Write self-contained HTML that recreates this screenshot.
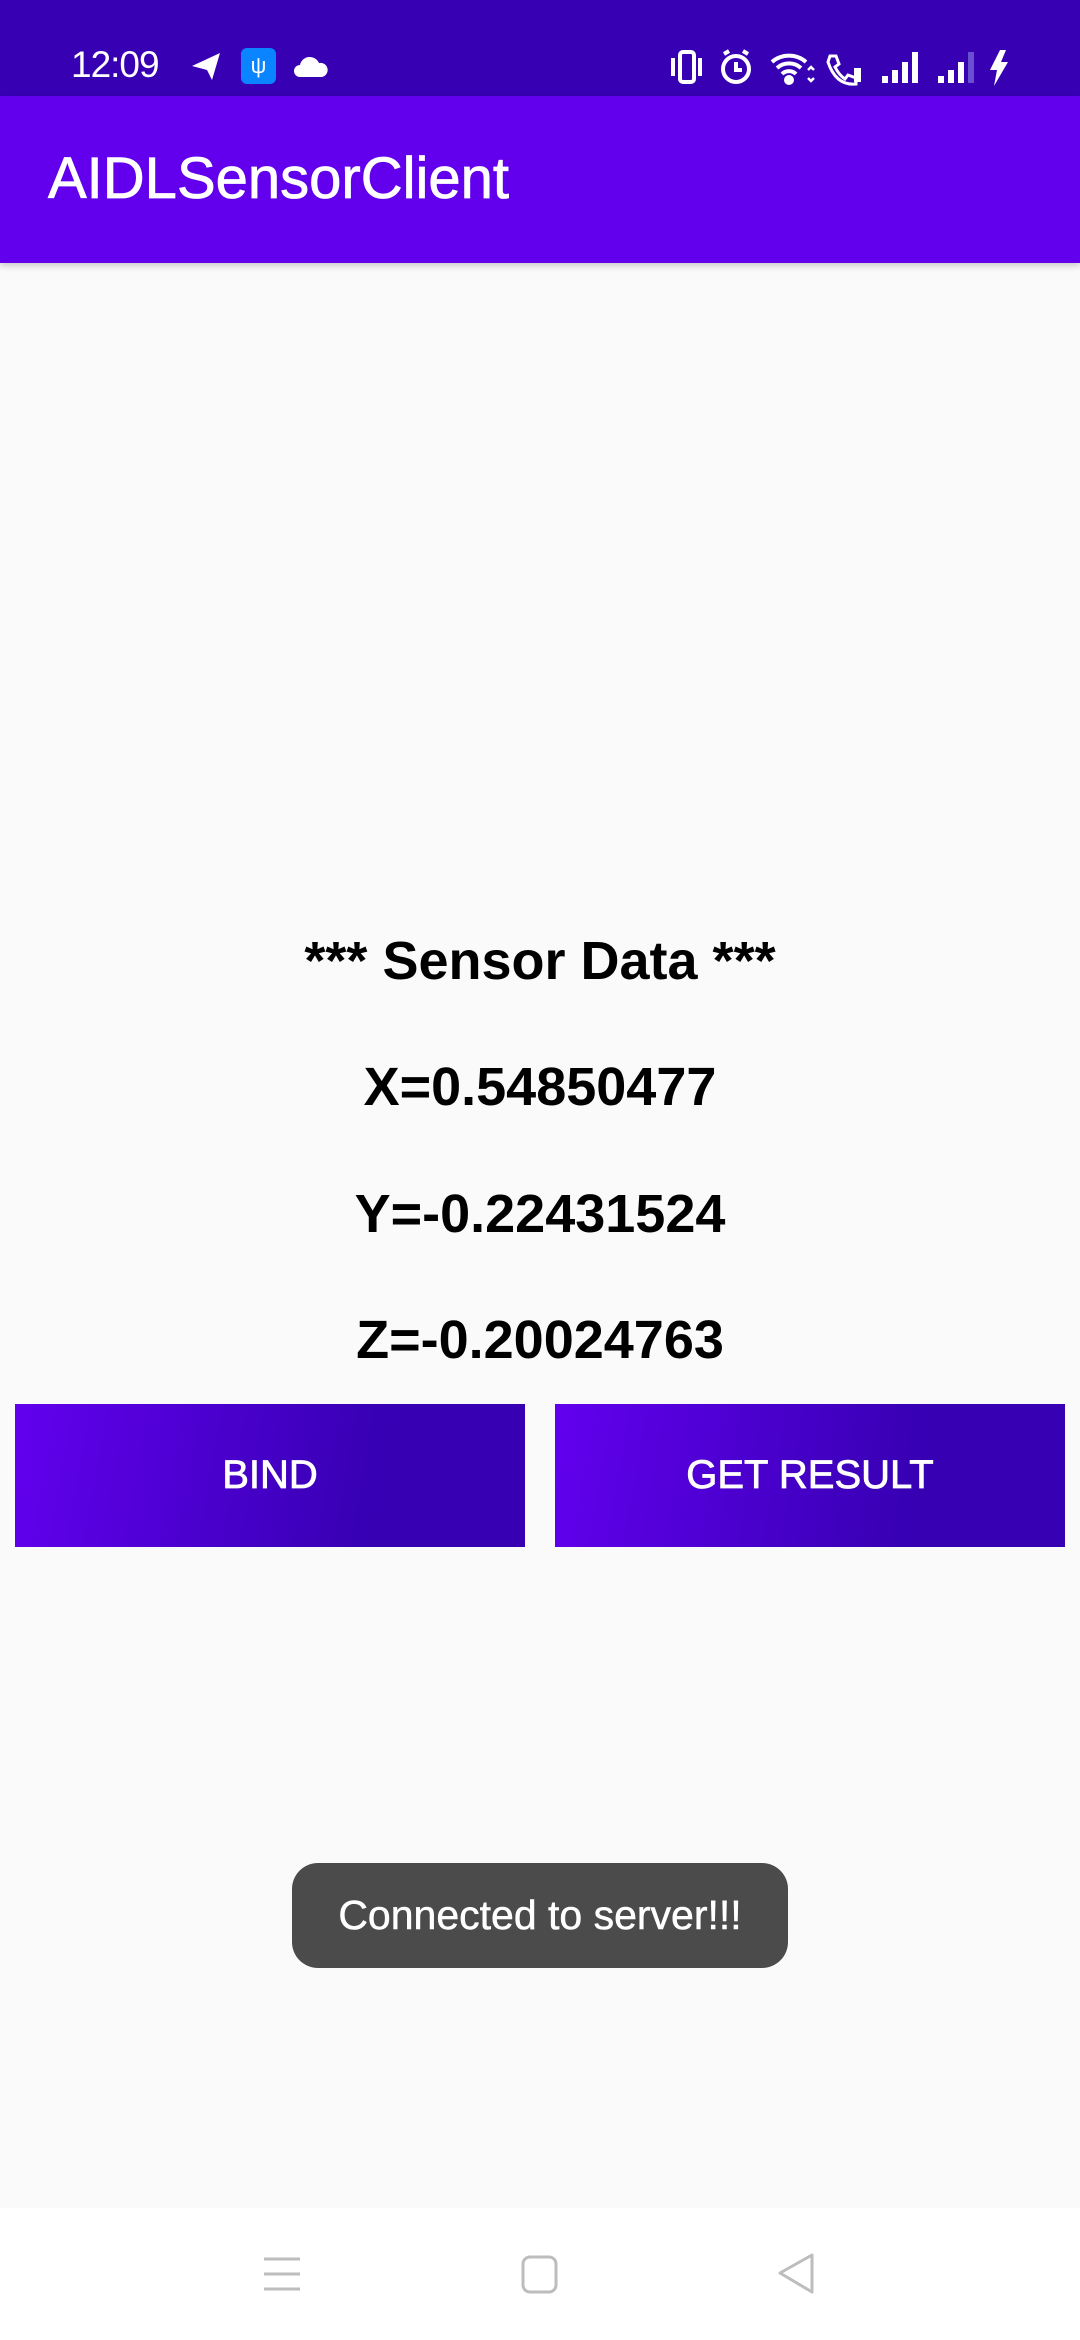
<!DOCTYPE html>
<html><head><meta charset="utf-8"><style>
*{margin:0;padding:0;box-sizing:border-box}
body{width:1080px;height:2340px;background:#fafafa;font-family:"Liberation Sans",Roboto,sans-serif;position:relative;overflow:hidden}
.abs{position:absolute}
#status{left:0;top:0;width:1080px;height:96px;background:#3700b3}
#appbar{left:0;top:96px;width:1080px;height:167px;background:#6200ee;box-shadow:0 3px 6px rgba(0,0,0,.18)}
.title{left:48px;font-size:58px;color:#fff;-webkit-text-stroke:0.8px #fff}
.c{left:0;width:1080px;text-align:center;font-weight:bold;color:#000;font-size:54px}
.btn{top:1404px;height:143px;width:510px;background:linear-gradient(100deg,#6200ee,#3700b3 70%);color:#fff;font-size:40px;display:flex;align-items:center;justify-content:center;-webkit-text-stroke:0.8px #fff}
#toast{left:292px;top:1863px;width:496px;height:105px;background:#4b4b4b;border-radius:26px;color:#fff;font-size:41px;display:flex;align-items:center;justify-content:center;-webkit-text-stroke:0.5px #fff}
#nav{left:0;top:2208px;width:1080px;height:132px;background:#fff}
</style></head><body>
<div id="status" class="abs">
 <div class="abs" style="left:71px;top:44px;font-size:37px;color:#fff;letter-spacing:-1px">12:09</div>
 <svg class="abs" style="left:190px;top:50px" width="32" height="32" viewBox="0 0 32 32"><path d="M2 16 L30 3 L22 30 L17 20 Z" fill="#fff"/></svg>
 <div class="abs" style="left:241px;top:48px;width:35px;height:36px;background:#0a84ff;border-radius:6px;color:#fff;font-size:22px;text-align:center;line-height:36px">ψ</div>
 <svg class="abs" style="left:294px;top:55px" width="34" height="22" viewBox="0 0 34 22"><path d="M6 22 A6 6 0 0 1 6 10 A10 10 0 0 1 25 8 A7 7 0 0 1 28 22 Z" fill="#fff"/></svg>
 <svg class="abs" style="left:670px;top:48px" width="345" height="38" viewBox="0 0 345 38" fill="none" stroke="#fff" stroke-width="4">
  <rect x="10" y="4" width="14" height="30" rx="3"/><path d="M3 10 v18 M30 10 v18"/>
  <circle cx="66" cy="21" r="13"/><path d="M66 14 v8 h6 M54 6 l5 -3 M78 6 l-5 -3"/>
  <path d="M102 14 a26 26 0 0 1 34 0 M107 20 a18 18 0 0 1 24 0 M112 26 a10 10 0 0 1 14 0"/><circle cx="119" cy="32" r="3" fill="#fff"/><path d="M138 22 l3 -3 3 3 M138 30 l3 3 3 -3" stroke-width="2.5"/>
  <path d="M160 8 l6 0 l3 8 l-4 3 q4 8 10 12 l3 -4 l8 3 v6 q-20 2 -28 -22 z" stroke-width="3"/><rect x="184" y="20" width="7" height="14" fill="#fff" stroke="none"/>
  <g fill="#fff" stroke="none"><rect x="212" y="28" width="6" height="7"/><rect x="222" y="22" width="6" height="13"/><rect x="232" y="14" width="6" height="21"/><rect x="242" y="4" width="6" height="31"/>
  <rect x="268" y="28" width="6" height="7"/><rect x="278" y="22" width="6" height="13"/><rect x="288" y="14" width="6" height="21"/><rect x="298" y="4" width="6" height="31" fill="#6a50d0"/>
  <path d="M330 2 L320 22 H327 L324 38 L338 14 H331 L336 2 Z"/></g>
 </svg>
</div>
<div id="appbar" class="abs"><div class="abs title" style="top:49px">AIDLSensorClient</div></div>
<div class="abs c" style="top:930px">*** Sensor Data ***</div>
<div class="abs c" style="top:1056px">X=0.54850477</div>
<div class="abs c" style="top:1183px">Y=-0.22431524</div>
<div class="abs c" style="top:1309px">Z=-0.20024763</div>
<div class="abs btn" style="left:15px">BIND</div>
<div class="abs btn" style="left:555px">GET RESULT</div>
<div id="toast" class="abs">Connected to server!!!</div>
<div id="nav" class="abs">
 <svg class="abs" style="left:262px;top:48px" width="40" height="36"><path d="M2 3h36M2 18h36M2 33h36" stroke="#bdbdbd" stroke-width="3"/></svg>
 <svg class="abs" style="left:520px;top:46px" width="40" height="40"><rect x="3" y="3" width="33" height="35" rx="7" fill="none" stroke="#bdbdbd" stroke-width="3"/></svg>
 <svg class="abs" style="left:776px;top:44px" width="40" height="44"><path d="M36 3 L4 21 L36 40 Z" fill="none" stroke="#bdbdbd" stroke-width="3" stroke-linejoin="round"/></svg>
</div>
</body></html>
